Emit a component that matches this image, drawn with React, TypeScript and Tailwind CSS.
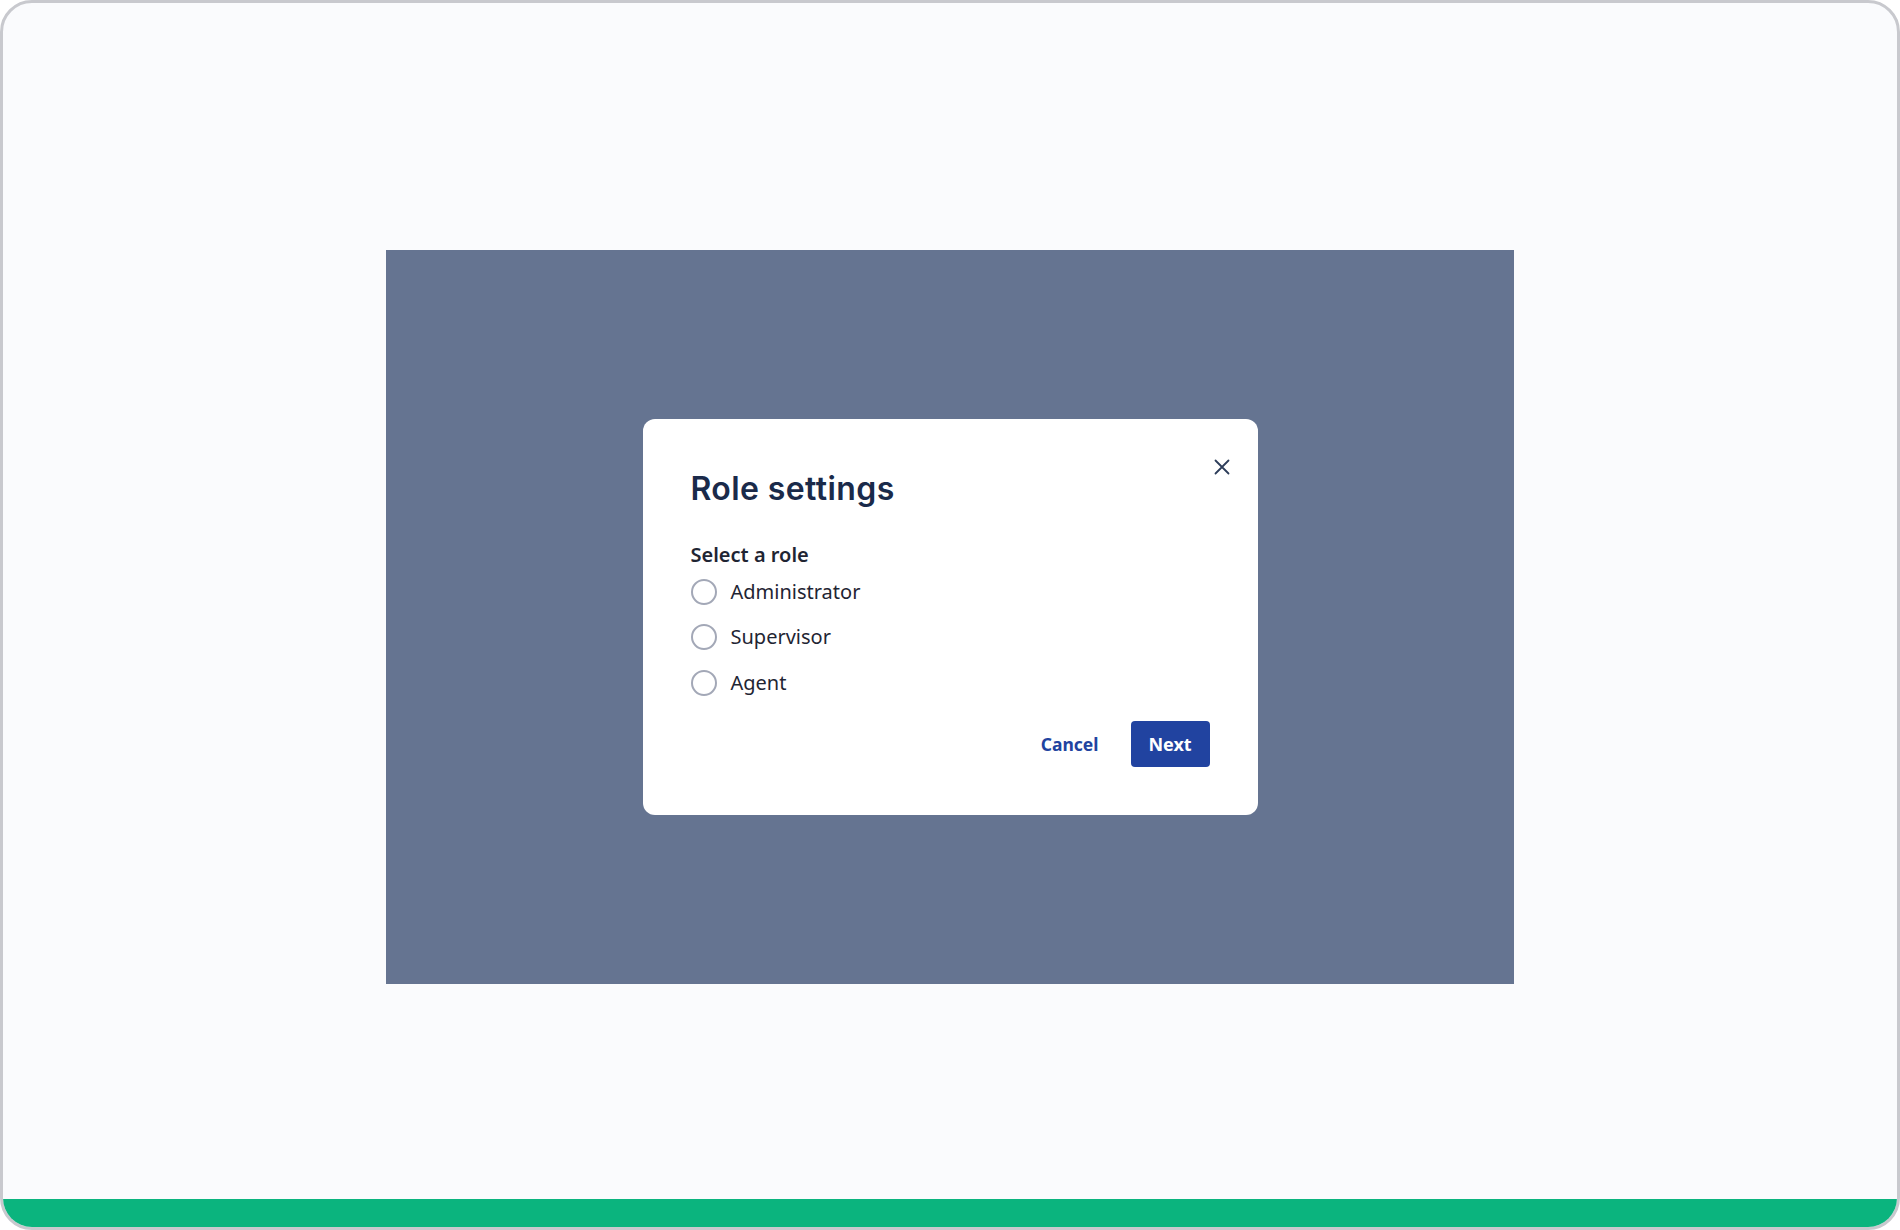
import React from "react";

function Radio({ label }: { label: string }) {
  return (
    <label className="flex h-[45.5px] items-center gap-[14px] cursor-pointer">
      <span className="block h-[26px] w-[26px] rounded-full border-2 border-[#a3a8b7] bg-white" />
      <span className="text-[20px] leading-[28px] text-[#1f2533]" style={{ fontFamily: '"Noto Sans", sans-serif' }}>
        {label}
      </span>
    </label>
  );
}

export default function App() {
  return (
    <div className="h-[1230px] w-[1900px] bg-white">
      <div className="flex h-full w-full flex-col overflow-hidden rounded-[32px] border-[3px] border-[#c8c9ce] bg-[#fafbfd]">
        <div className="flex flex-1 justify-center pt-[247px]">
          <div className="flex h-[734px] w-[1128px] items-center justify-center bg-[#657491]">
            <div className="relative w-[615px] rounded-[12px] bg-white px-[48px] pt-[50px] pb-[48px]">
              <button className="absolute right-[28px] top-[40px] text-[#2d3d5a]" aria-label="Close">
                <svg width="16" height="16" viewBox="0 0 16 16" fill="none">
                  <path d="M1.5 1.5L14.5 14.5M14.5 1.5L1.5 14.5" stroke="currentColor" strokeWidth="1.8" strokeLinecap="round" />
                </svg>
              </button>
              <h2
                className="text-[32px] leading-[40px] font-semibold tracking-[0.4px] text-[#1a2a4a]"
                style={{ fontFamily: 'Inter, sans-serif' }}
              >
                Role settings
              </h2>
              <div
                className="mt-[32px] text-[20px] leading-[28px] font-semibold text-[#1f2533]"
                style={{ fontFamily: '"Noto Sans", sans-serif' }}
              >
                Select a role
              </div>
              <div className="flex flex-col">
                <Radio label="Administrator" />
                <Radio label="Supervisor" />
                <Radio label="Agent" />
              </div>
              <div className="mt-[16px] flex items-center justify-end gap-[32px]" style={{ fontFamily: '"Noto Sans", sans-serif' }}>
                <button className="text-[17.5px] font-bold text-[#2143a0]">Cancel</button>
                <button className="flex h-[46px] w-[79px] items-center justify-center rounded-[4px] bg-[#2143a0] text-[18px] font-bold text-white">
                  Next
                </button>
              </div>
            </div>
          </div>
        </div>
        <div className="h-[28px] w-full bg-[#0bb47e]" />
      </div>
    </div>
  );
}
